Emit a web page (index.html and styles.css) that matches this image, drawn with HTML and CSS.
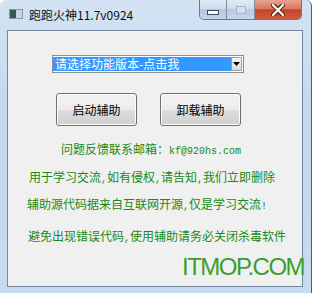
FILE: index.html
```html
<!DOCTYPE html>
<html lang="zh">
<head>
<meta charset="utf-8">
<title>跑跑火神11.7v0924</title>
<link rel="stylesheet" href="styles.css">
</head>
<body>
<div class="window">
  <div class="titlebar">
    <svg class="app-icon" width="14" height="10" viewBox="0 0 14 10">
      <rect x="0.5" y="0.5" width="13" height="9" fill="#e8eef2" stroke="#8a9aa2"/>
      <rect x="1" y="1" width="6" height="8" fill="#2f5e4f"/>
      <rect x="7" y="1" width="6" height="8" fill="#c9d6da"/>
    </svg>
    <span class="title">跑跑火神11.7v0924</span>
    <div class="caption">
      <div class="cap cap-min"><span class="glyph-min"></span></div>
      <div class="cap cap-max"><span class="glyph-max"></span></div>
      <div class="cap cap-close">
        <svg width="14" height="12" viewBox="0 0 14 12">
          <path d="M2 1 L7 5 L12 1 M2 11 L7 7 L12 11" fill="none" stroke="#5a2418" stroke-width="4" stroke-linecap="round"/>
          <path d="M2 1 L12 11 M12 1 L2 11" fill="none" stroke="#5a2418" stroke-width="4" stroke-linecap="round"/>
          <path d="M2 1 L12 11 M12 1 L2 11" fill="none" stroke="#ffffff" stroke-width="2.2" stroke-linecap="round"/>
        </svg>
      </div>
    </div>
  </div>
  <div class="client">
    <div class="combo">
      <div class="combo-text">请选择功能版本-点击我</div>
      <div class="combo-btn">
        <svg width="7" height="4" viewBox="0 0 7 4"><path d="M0 0 H7 L3.5 4 Z" fill="#000"/></svg>
      </div>
    </div>
    <div class="buttons">
      <button class="btn">启动辅助</button>
      <button class="btn">卸载辅助</button>
    </div>
    <p class="note n1">问题反馈联系邮箱：<span class="h">kf@920hs.com</span></p>
    <p class="note n2">用于学习交流<span class="h">,</span>如有侵权<span class="h">,</span>请告知<span class="h">,</span>我们立即删除</p>
    <p class="note n3">辅助源代码据来自互联网开源<span class="h">,</span>仅是学习交流<span class="h">!</span></p>
    <p class="note n4">避免出现错误代码<span class="h">,</span>使用辅助请务必关闭杀毒软件</p>
  </div>
  <div class="watermark">ITMOP.COM</div>
</div>
</body>
</html>
```

FILE: styles.css
```css
html, body {
  margin: 0;
  padding: 0;
  background: #ffffff;
}

.window {
  position: relative;
  width: 312px;
  height: 293px;
  box-sizing: border-box;
  display: flex;
  flex-direction: column;
  border-radius: 6px 6px 0 0;
  border-right: 1px solid #4e5d6c;
  background: linear-gradient(180deg, #d3e3f4 0%, #c3d8ee 40%, #c8dbf0 100%);
  font-family: "Noto Sans CJK SC", "Liberation Sans", sans-serif;
  overflow: hidden;
}

.titlebar {
  height: 30px;
  display: flex;
  align-items: flex-start;
  padding-left: 9px;
  padding-right: 9px;
  flex: none;
}

.app-icon {
  margin-top: 9px;
  flex: none;
}

.title {
  margin-top: 7px;
  margin-left: 6px;
  font-size: 12px;
  line-height: 16px;
  color: #101010;
}

.caption {
  margin-left: auto;
  display: flex;
  height: 20px;
  border: 1px solid #6a7a8c;
  border-top: none;
  border-radius: 0 0 5px 5px;
  overflow: hidden;
  box-sizing: border-box;
}

.cap {
  height: 19px;
  display: flex;
  align-items: center;
  justify-content: center;
  box-sizing: border-box;
}

.cap-min {
  width: 27px;
  border-right: 1px solid #7d8fa3;
  background: linear-gradient(180deg, #e3ecf6 0%, #cfdcec 45%, #b4c7df 50%, #c4d5ea 100%);
}

.cap-max {
  width: 28px;
  border-right: 1px solid #7d8fa3;
  background: linear-gradient(180deg, #e3ecf6 0%, #cfdcec 45%, #b9cbe2 50%, #c6d6ea 100%);
}

.cap-close {
  width: 46px;
  background: linear-gradient(180deg, #e8a493 0%, #d7785f 45%, #c2442c 52%, #cf5a3e 100%);
}

.glyph-min {
  display: block;
  width: 10px;
  height: 3px;
  background: #ffffff;
  border: 1px solid #3b4c60;
  margin-top: 6px;
}

.glyph-max {
  display: block;
  width: 8px;
  height: 6px;
  border: 1px solid #a6b6c8;
  background: #d5e0ec;
}

.client {
  flex: 1;
  margin: 0 8px 6px 7px;
  background: #f0f0f0;
  border: 1px solid #75879b;
  display: flex;
  flex-direction: column;
  align-items: flex-start;
}

.combo {
  margin: 24px 0 0 44px;
  width: 192px;
  height: 18px;
  box-sizing: border-box;
  border: 1px solid #8e8e8e;
  background: #ffffff;
  display: flex;
  align-items: center;
  padding-right: 1px;
}

.combo-text {
  flex: 1;
  height: 14px;
  line-height: 14px;
  font-size: 12px;
  padding-left: 2px;
  color: #ffffff;
  background: #3399ff;
}

.combo-btn {
  width: 11px;
  height: 14px;
  box-sizing: border-box;
  border: 1px solid #a0a0a0;
  background: linear-gradient(180deg, #f6f6f6, #dcdcdc);
  display: flex;
  align-items: center;
  justify-content: center;
}

.buttons {
  display: flex;
  gap: 23px;
  margin: 20px 0 0 48px;
}

.btn {
  width: 81px;
  height: 33px;
  margin: 0;
  padding: 0;
  border: 1px solid #707070;
  border-radius: 3px;
  background: linear-gradient(180deg, #f2f2f2 0%, #ebebeb 50%, #dddddd 51%, #cfcfcf 100%);
  box-shadow: inset 0 0 0 1px #fcfcfc;
  font-family: "Noto Sans CJK SC", sans-serif;
  font-size: 12px;
  line-height: 16px;
  color: #000000;
}

.note {
  margin: 0;
  font-size: 12px;
  line-height: 16px;
  color: #178a17;
  white-space: nowrap;
}

.h {
  font-family: "Liberation Mono", monospace;
  font-size: 10px;
}

.n1 { margin-top: 15px; margin-left: 53px; }
.n2 { margin-top: 9px; margin-left: 21px; }
.n3 { margin-top: 8px; margin-left: 19px; }
.n4 { margin-top: 13px; margin-left: 20px; }

.watermark {
  position: absolute;
  left: 182px;
  top: 255px;
  font-family: "Liberation Sans", Arial, sans-serif;
  font-size: 24px;
  line-height: 24px;
  letter-spacing: -1.5px;
  color: #3a9e30;
}
```
